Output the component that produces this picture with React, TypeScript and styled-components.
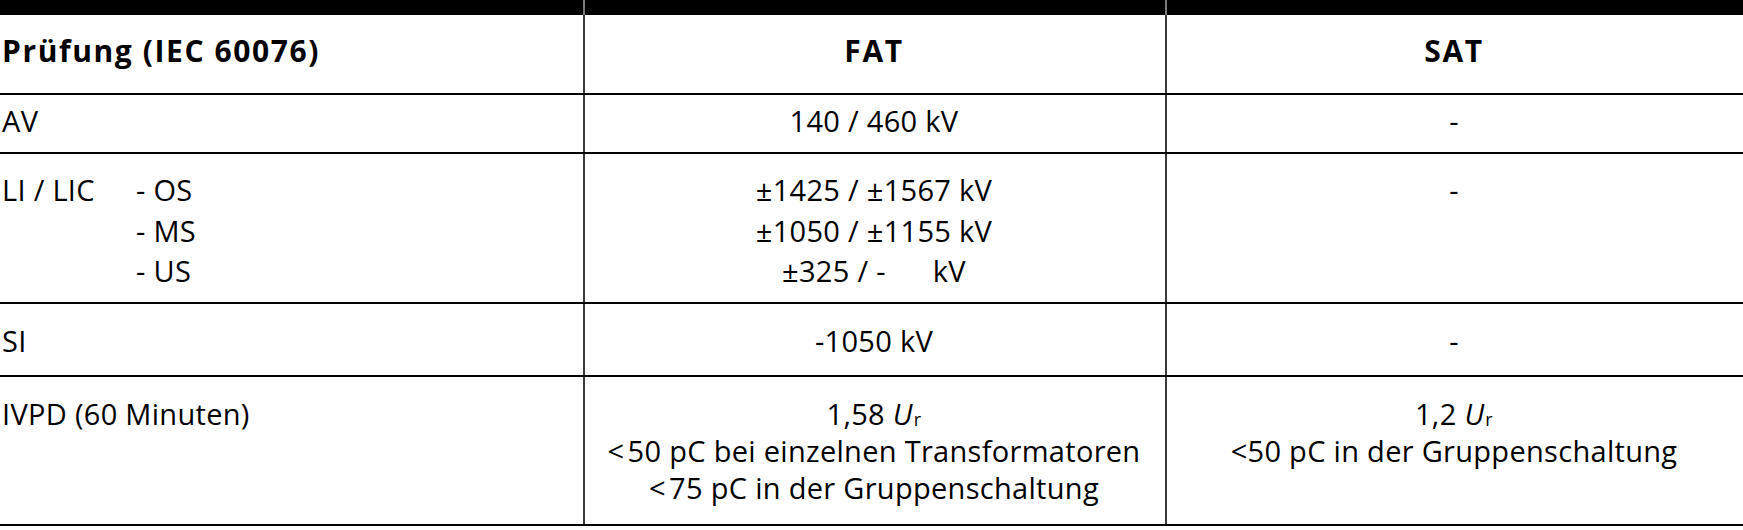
import styled, { createGlobalStyle } from 'styled-components'

const GlobalStyle = createGlobalStyle`
  html, body {
    margin: 0;
    padding: 0;
    background: #ffffff;
  }
  body {
    font-family: 'Open Sans', 'Noto Sans', sans-serif;
    color: #000000;
  }
`

const cols = '583px 582px 1fr'

const Table = styled.div`
  width: 1743px;
  font-size: 29px;
  line-height: 40px;
  letter-spacing: 0.3px;
`

const TopBar = styled.div`
  display: grid;
  grid-template-columns: ${cols};
  height: 15px;
`

const BarSegment = styled.div`
  background: #000000;

  & + & {
    border-left: 2px solid #7a7a7a;
  }
`

const Row = styled.div<{ $pt: number; $pb: number; $lh?: number }>`
  display: grid;
  grid-template-columns: ${cols};
  border-bottom: 2px solid #000000;
  line-height: ${(p) => p.$lh ?? 40}px;

  & > div {
    padding-top: ${(p) => p.$pt}px;
    padding-bottom: ${(p) => p.$pb}px;
  }
`

const Cell = styled.div<{ $center?: boolean }>`
  box-sizing: border-box;
  padding-left: 2px;
  padding-right: 4px;
  text-align: ${(p) => (p.$center ? 'center' : 'left')};
  white-space: pre;

  & + & {
    border-left: 2px solid #3a3a3a;
  }
`

const HeadText = styled.span`
  font-size: 30px;
  font-weight: 700;
  letter-spacing: 1.6px;
`

const Line = styled.div``

const SplitLabel = styled.div`
  display: flex;
`

const LabelMain = styled.span`
  width: 134px;
  flex: none;
`

const SubList = styled.div`
  display: flex;
  flex-direction: column;
`

const Ur = styled.span`
  font-style: italic;
`

const Sub = styled.span`
  font-size: 0.62em;
  font-style: normal;
  line-height: 0;
  vertical-align: -0.08em;
  margin-left: 1px;
`

function RatedU() {
  return (
    <Ur>
      U<Sub>r</Sub>
    </Ur>
  )
}

export default function App() {
  return (
    <>
      <GlobalStyle />
      <Table>
        <TopBar>
          <BarSegment />
          <BarSegment />
          <BarSegment />
        </TopBar>

        <Row $pt={16} $pb={22}>
          <Cell>
            <HeadText>Prüfung (IEC 60076)</HeadText>
          </Cell>
          <Cell $center>
            <HeadText>FAT</HeadText>
          </Cell>
          <Cell $center>
            <HeadText>SAT</HeadText>
          </Cell>
        </Row>

        <Row $pt={6} $pb={11}>
          <Cell>AV</Cell>
          <Cell $center>140 / 460 kV</Cell>
          <Cell $center>-</Cell>
        </Row>

        <Row $pt={16} $pb={10} $lh={40.5}>
          <Cell>
            <SplitLabel>
              <LabelMain>LI / LIC</LabelMain>
              <SubList>
                <Line>- OS</Line>
                <Line>- MS</Line>
                <Line>- US</Line>
              </SubList>
            </SplitLabel>
          </Cell>
          <Cell $center>
            <Line>±1425 / ±1567 kV</Line>
            <Line>±1050 / ±1155 kV</Line>
            <Line>±325 / -      kV</Line>
          </Cell>
          <Cell $center>-</Cell>
        </Row>

        <Row $pt={17} $pb={14}>
          <Cell>SI</Cell>
          <Cell $center>-1050 kV</Cell>
          <Cell $center>-</Cell>
        </Row>

        <Row $pt={18} $pb={18} $lh={37}>
          <Cell>IVPD (60 Minuten)</Cell>
          <Cell $center>
            <Line>
              1,58 <RatedU />
            </Line>
            <Line>{'<\u200a50 pC bei einzelnen Transformatoren'}</Line>
            <Line>{'<\u200a75 pC in der Gruppenschaltung'}</Line>
          </Cell>
          <Cell $center>
            <Line>
              1,2 <RatedU />
            </Line>
            <Line>{'<50 pC in der Gruppenschaltung'}</Line>
          </Cell>
        </Row>
      </Table>
    </>
  )
}
